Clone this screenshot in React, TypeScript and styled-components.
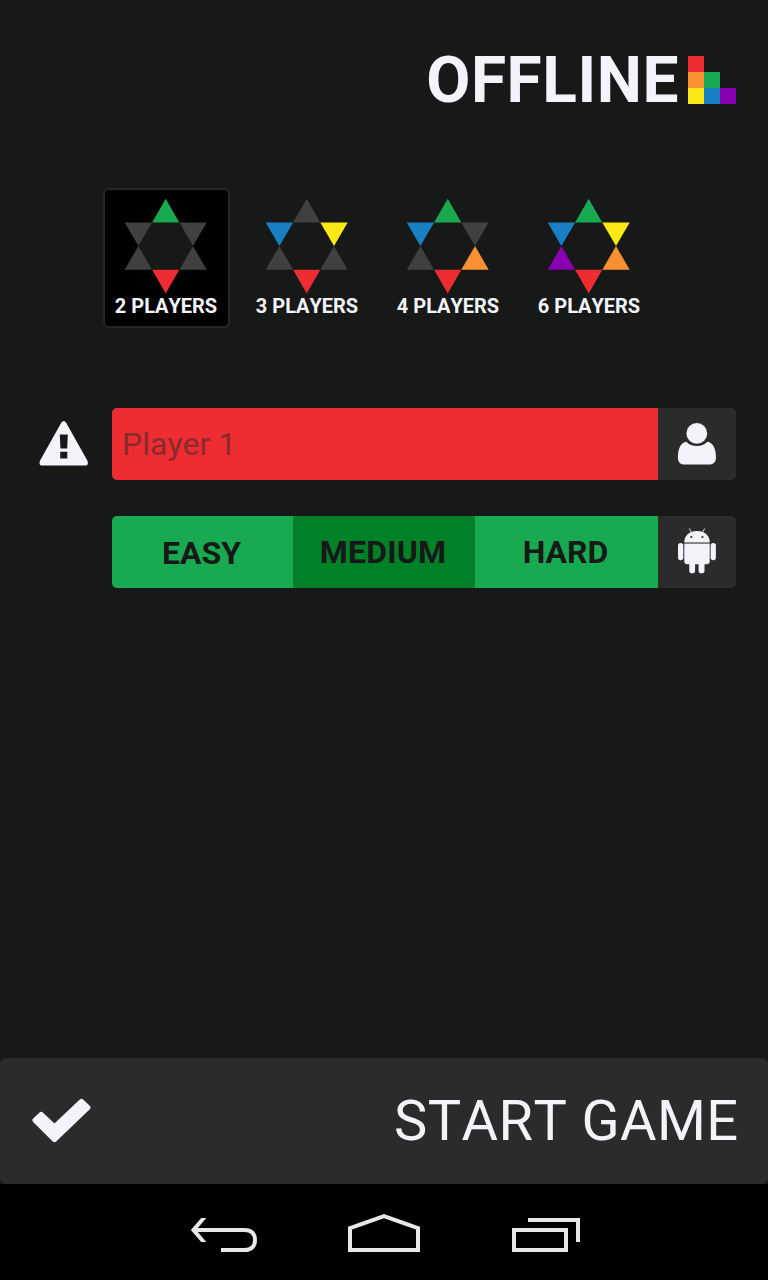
import React from "react";
import styled, { createGlobalStyle } from "styled-components";

const color = {
  bg: "#171918",
  panel: "#2a2c2b",
  text: "#f3f4f9",
  idle: "#3f4140",
  red: "#ee2d32",
  orange: "#f99132",
  green: "#18a951",
  darkGreen: "#018127",
  yellow: "#fae817",
  blue: "#1880c3",
  purple: "#8800b0",
};

const GlobalStyle = createGlobalStyle`
  *, *::before, *::after { box-sizing: border-box; }
  body { margin: 0; background: ${color.bg}; }
  button { font: inherit; font-kerning: inherit; color: inherit; border: 0; padding: 0; background: none; }
  svg { display: block; flex: none; }
`;

const Screen = styled.div`
  display: flex;
  flex-direction: column;
  width: 768px;
  height: 1280px;
  background: ${color.bg};
  color: ${color.text};
  font-family: Roboto, "Liberation Sans", sans-serif;
  font-kerning: none;
  overflow: hidden;
`;

const Header = styled.header`
  display: flex;
  justify-content: flex-end;
  padding: 40px 32px 0 0;
  height: 188px;
`;

const Title = styled.h1`
  margin: 0 9px 0 0;
  font-size: 64px;
  line-height: 81px;
  height: 80px;
  font-weight: 700;
  letter-spacing: 0.55px;
  white-space: nowrap;
`;

const LogoGrid = styled.div`
  display: grid;
  grid-template-columns: repeat(3, 16px);
  grid-template-rows: repeat(3, 16px);
  margin-top: 16px;
`;

const LogoCell = styled.span<{ $fill?: string }>`
  background: ${(p) => p.$fill ?? "transparent"};
`;

const ModeList = styled.div`
  display: flex;
  gap: 14px;
  padding-left: 103px;
  height: 220px;
`;

const ModeCard = styled.button<{ $active?: boolean }>`
  display: flex;
  flex-direction: column;
  align-items: center;
  width: 127px;
  height: 140px;
  padding: 8px 1.6px 0 0;
  border: 2px solid ${(p) => (p.$active ? "#252726" : "transparent")};
  border-radius: 6px;
  background: ${(p) => (p.$active ? "#000" : "transparent")};
`;

const ModeLabel = styled.span`
  padding-left: 0.6px;
  font-size: 20px;
  line-height: 24px;
  font-weight: 700;
  white-space: nowrap;
`;

const PlayerRow = styled.div`
  display: flex;
  height: 72px;
  margin: 0 32px 36px 0;
`;

const RowStatus = styled.div`
  width: 112px;
  padding: 12px 0 0 38px;
`;

const NameField = styled.div`
  flex: 1;
  padding-left: 10px;
  border-radius: 5px 0 0 5px;
  background: ${color.red};
  color: #8b2a2c;
  font-size: 32px;
  line-height: 73px;
`;

const LevelGroup = styled.div`
  display: grid;
  flex: 1;
  grid-template-columns: 181px 182px 183px;
  border-radius: 5px 0 0 5px;
  overflow: hidden;
`;

const Level = styled.button<{ $lift?: number; $active?: boolean }>`
  padding: ${(p) => 2 - (p.$lift ?? 0)}px 2px 0 0;
  background: ${(p) => (p.$active ? color.darkGreen : color.green)};
  color: ${color.bg};
  font-size: 32px;
  font-weight: 700;
  letter-spacing: ${(p) => (p.$active ? 0.2 : 0)}px;
  line-height: 70px;
`;

const TypeButton = styled.button`
  display: flex;
  justify-content: center;
  width: 78px;
  padding-top: 12px;
  border-radius: 0 5px 5px 0;
  background: ${color.panel};
`;

const StartButton = styled.button`
  display: flex;
  justify-content: space-between;
  align-items: center;
  height: 126px;
  margin-top: auto;
  padding: 0 29.5px 0 32px;
  border-radius: 6px;
  background: ${color.panel};
`;

const StartLabel = styled.span`
  font-size: 56px;
  line-height: 66px;
  font-weight: 400;
  letter-spacing: 0.4px;
  white-space: nowrap;
`;

const NavBar = styled.nav`
  display: flex;
  align-items: flex-start;
  height: 96px;
  padding: 28px 0 0 188px;
  gap: 84px;
  background: #000;
`;

const sides = {
  top: "41,0 54.6,23.7 27.4,23.7",
  topRight: "54.6,23.7 82,23.7 68.3,47.3",
  bottomRight: "68.3,47.3 82,71 54.6,71",
  bottom: "27.4,71 54.6,71 41,94.7",
  bottomLeft: "13.7,47.3 27.4,71 0,71",
  topLeft: "0,23.7 27.4,23.7 13.7,47.3",
};

type Side = keyof typeof sides;

const modes: { label: string; active?: boolean; seats: Partial<Record<Side, string>> }[] = [
  { label: "2 PLAYERS", active: true, seats: { top: color.green, bottom: color.red } },
  { label: "3 PLAYERS", seats: { topLeft: color.blue, topRight: color.yellow, bottom: color.red } },
  {
    label: "4 PLAYERS",
    seats: { top: color.green, topLeft: color.blue, bottomRight: color.orange, bottom: color.red },
  },
  {
    label: "6 PLAYERS",
    seats: {
      top: color.green,
      topLeft: color.blue,
      topRight: color.yellow,
      bottomLeft: color.purple,
      bottomRight: color.orange,
      bottom: color.red,
    },
  },
];

const BoardStar = ({ seats }: { seats: Partial<Record<Side, string>> }) => (
  <svg width="82" height="96" viewBox="0.3 -0.7 82 96" overflow="visible">
    <polygon points="27.4,23.7 54.6,23.7 68.3,47.3 54.6,71 27.4,71 13.7,47.3" fill={color.bg} />
    {(Object.keys(sides) as Side[]).map((side) => (
      <polygon key={side} points={sides[side]} fill={seats[side] ?? color.idle} />
    ))}
  </svg>
);

const WarningIcon = () => (
  <svg width="52" height="48" viewBox="38 420 52 48">
    <path
      fill={color.text}
      fillRule="evenodd"
      d="M61.4 422.4Q63.7 419.4 66 422.4L87.3 460.6Q89.3 465.5 84.800 465.6H42.6Q38.100 465.5 40.100 460.6ZM59.8 434.4L60.4 448.6H67.2L67.8 434.4ZM60.2 451.8V458.6H67.3V451.8Z"
    />
  </svg>
);

const PersonIcon = () => (
  <svg width="40" height="48" viewBox="677 420 40 48">
    <circle cx="696.8" cy="433.4" r="10.4" fill={color.text} />
    <path
      fill={color.text}
      d="M686.3 441.7C689 444.6 692.7 446 696.8 446S704.6 444.6 707.3 441.7C713.6 442.6 716 449.4 716 457.8C716 462.1 713.2 464.6 709.4 464.6H684.2C680.4 464.6 677.9 462.1 677.9 457.8C677.9 449.4 680.3 442.6 686.3 441.7Z"
    />
  </svg>
);

const RobotIcon = () => (
  <svg width="40" height="48" viewBox="677 528 40 48">
    <g fill={color.text}>
      <path d="M684.3 541.9C684.3 535.5 689.6 531 697 531S709.7 535.5 709.7 541.9Z" />
      <path d="M684.3 543.7H709.7V561.3Q709.7 564.3 706.7 564.3H687.3Q684.3 564.3 684.3 561.3Z" />
      <rect x="678" y="543" width="5.3" height="17.2" rx="2.6" />
      <rect x="710.6" y="543" width="5.3" height="17.2" rx="2.6" />
      <path d="M689.3 563H695.1V570.4A2.9 2.9 0 0 1 689.3 570.4Z" />
      <path d="M698.6 563H704.5V570.4A2.9 2.9 0 0 1 698.6 570.4Z" />
      <rect x="684.3" y="542" width="25.4" height="1.8" fill="#8b8c8f" />
    </g>
    <path d="M689.2 528.5L691.4 532.3M704.7 528.5L702.6 532.3" stroke={color.text} strokeWidth="0.9" />
    <circle cx="691.3" cy="537" r="1.1" fill={color.panel} />
    <circle cx="702.5" cy="537" r="1.1" fill={color.panel} />
  </svg>
);

const CheckIcon = () => (
  <svg width="60" height="48" viewBox="32 1097 60 48">
    <path
      d="M35.3 1120.3L41.2 1114.8L54.5 1127.3L81.4 1101.7L87.6 1107.6L54.5 1139.3Z"
      fill={color.text}
      stroke={color.text}
      strokeWidth="5.6"
      strokeLinejoin="round"
    />
  </svg>
);

const navInk = "#e8e8e8";

const BackIcon = () => (
  <svg width="72" height="44" viewBox="188 1212 72 44">
    <path d="M194 1230H244.5C251.5 1230 255 1234 255 1240S251.5 1250 244.5 1250H221" fill="none" stroke={navInk} strokeWidth="4" />
    <path d="M190.8 1230L201.2 1218H206.3L196.2 1230L206.3 1242H201.2Z" fill={navInk} />
  </svg>
);

const HomeIcon = () => (
  <svg width="80" height="44" viewBox="344 1212 80 44">
    <path d="M350 1250V1228.1L384 1216.2L418 1228.1V1250Z" fill="none" stroke={navInk} strokeWidth="4" />
  </svg>
);

const RecentsIcon = () => (
  <svg width="76" height="44" viewBox="508 1212 76 44">
    <path d="M514 1230H566V1250H514ZM528 1220H578V1242" fill="none" stroke={navInk} strokeWidth="4" />
  </svg>
);

const logoCells = [
  color.red, undefined, undefined,
  color.orange, color.green, undefined,
  color.yellow, color.blue, color.purple,
];

export default function App() {
  return (
    <>
      <GlobalStyle />
      <Screen>
        <Header>
          <Title>OFFLINE</Title>
          <LogoGrid>
            {logoCells.map((fill, i) => (
              <LogoCell key={i} $fill={fill} />
            ))}
          </LogoGrid>
        </Header>

        <ModeList>
          {modes.map((mode) => (
            <ModeCard key={mode.label} $active={mode.active}>
              <BoardStar seats={mode.seats} />
              <ModeLabel>{mode.label}</ModeLabel>
            </ModeCard>
          ))}
        </ModeList>

        <PlayerRow>
          <RowStatus>
            <WarningIcon />
          </RowStatus>
          <NameField>Player 1</NameField>
          <TypeButton aria-label="Human">
            <PersonIcon />
          </TypeButton>
        </PlayerRow>

        <PlayerRow>
          <RowStatus />
          <LevelGroup>
            <Level>EASY</Level>
            <Level $active $lift={2}>MEDIUM</Level>
            <Level $lift={2}>HARD</Level>
          </LevelGroup>
          <TypeButton aria-label="Computer">
            <RobotIcon />
          </TypeButton>
        </PlayerRow>

        <StartButton>
          <CheckIcon />
          <StartLabel>START GAME</StartLabel>
        </StartButton>

        <NavBar>
          <BackIcon />
          <HomeIcon />
          <RecentsIcon />
        </NavBar>
      </Screen>
    </>
  );
}
